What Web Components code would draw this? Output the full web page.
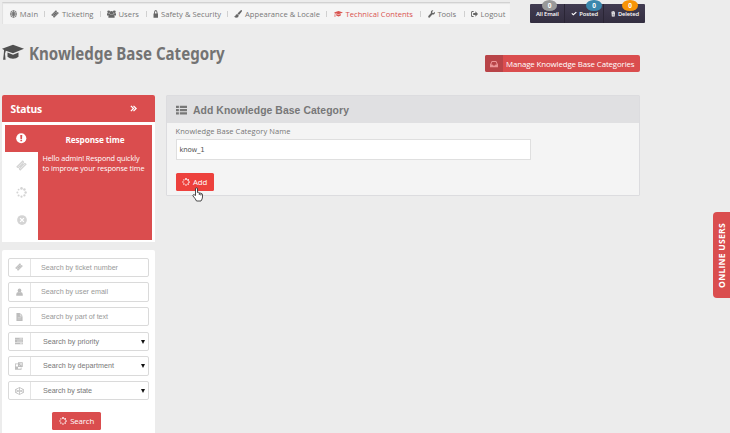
<!DOCTYPE html>
<html lang="en"><head><meta charset="utf-8"><title>Knowledge Base Category</title>
<style>html,body{margin:0;height:433px;overflow:hidden;background:#ececec}</style></head>
<body><help-desk></help-desk>
<script>
const base = '*{box-sizing:border-box}:host{display:block}';
function define(name, build, after) {
  customElements.define(name, class extends HTMLElement {
    connectedCallback() {
      if (this.shadowRoot) return;
      const root = this.attachShadow({mode: 'open'});
      root.innerHTML = build(this);
      if (after) after(this, root);
    }
  });
}
const burst = Array.from({length: 8}, (_, i) => {
  const a = i * Math.PI / 4;
  return `<circle cx="${8 + 6 * Math.sin(a)}" cy="${8 - 6 * Math.cos(a)}" r="${1.9 - i * .08}"/>`;
}).join('');
const icons = {
  globe: '<g fill="none" stroke="currentColor" stroke-width="1.5"><circle cx="8" cy="8" r="6.8"/><circle cx="8" cy="8" r="3.4"/><path d="M8 1v14M1 8h14M3 3l10 10M13 3 3 13"/></g>',
  ticket: '<path d="m9.8.3 1.800 1.800a1.600 1.600 0 0 0 2.200 2.200L15.700 6.200 6.200 15.700 4.300 13.800a1.600 1.600 0 0 0-2.200-2.200L.3 9.800z"/><path d="m9.600 3.800 2.700 2.700-5.800 5.800-2.700-2.700z" fill="none" stroke="var(--hole,#f4f4f4)" stroke-width=".7"/>',
  users: '<circle cx="3" cy="3.500" r="2.500"/><circle cx="13" cy="3.500" r="2.500"/><circle cx="8" cy="5.500" r="3.300"/><path d="M0 6.500h4.500l1 2L3 11H0zM16 6.500h-4.500l-1 2L13 11h3zM2.500 15.500v-3q0-4 3.500-4 2 1.200 4 0 3.500 0 3.500 4v3z"/>',
  lock: '<path d="M3 7V5a5 5 0 0 1 10 0v2h1.500v8.500h-13V7zm2.600 0h4.800V5a2.400 2.400 0 0 0-4.800 0z"/>',
  brush: '<path d="M15.500.5q1 1-.2 2.800L10 10 7 7.200 13 1Q14.500-.3 15.500.5zM6.500 8l3 2.800q.2 4.700-5.300 4.700Q1 15.500.3 12l2 .5q.7-4 4.200-4.500z"/>',
  cap: '<path d="M8 2 16 5.200 8 8.600 2.800 6.600 2.200 9l.4 4.500H.8L1.300 9 1.500 6 0 5.200zM4 8l4 1.700L12 8v3.200q-1.500 1.600-4 1.600t-4-1.600z"/>',
  wrench: '<path d="M15.300 3.500 12.500 6.200 10 5.900 9.700 3.500 12.300.8Q9 .1 7.300 2.200 6 4 6.900 6.200L.8 12.200Q0 13.500 1.300 14.800q1.300 1.200 2.500.3l6-6.100q3 .8 4.900-1.100 1.600-1.900.6-4.400z"/>',
  logout: '<path d="M6 2H3Q0 2 0 5v6q0 3 3 3h3v-2H3.500Q2 12 2 10.500v-5Q2 4 3.500 4H6zM10 2.500 16 8l-6 5.500V10H5V6h5z"/>',
  check: '<path d="m1 8 2.300-2.300 3 3L13 2l2.300 2.300-9 9z"/>',
  trash: '<path d="M5 2V.5h6V2h4v2H1V2zM2 5h12l-1 11H3zm3 2v7h1V7zm2.500 0v7h1V7zM10 7v7h1V7z" fill-rule="evenodd"/>',
  inbox: '<path d="M3.500 2h9L16 9v5.500H0V9zm1 2L2.300 9H5l1 2h4l1-2h2.700l-2.200-5z" fill-rule="evenodd"/>',
  alert: '<circle cx="8" cy="8" r="7.700"/><path d="M6.500 3h3L9.200 9H6.800zM6.700 10.200h2.600v2.400H6.700z" fill="#da4d4e"/>',
  close: '<circle cx="8" cy="8" r="7.800"/><path d="m5 5 6 6m0-6-6 6" stroke="#fff" stroke-width="2.200"/>',
  spin: burst,
  chevrons: '<path d="m2 2 6 6-6 6M8 2l6 6-6 6" fill="none" stroke="currentColor" stroke-width="3"/>',
  list: '<path d="M0 1h4v3.800H0zM5.300 1H16v3.800H5.300zM0 6.200h4V10H0zM5.300 6.200H16V10H5.300zM0 11.400h4v3.800H0zM5.300 11.400H16v3.800H5.300z"/>',
  user: '<circle cx="8" cy="5" r="4.200"/><path d="M.5 15.500V13q0-4.500 4.500-4.800 3 1.500 6 0 4.500.3 4.500 4.800v2.500z"/>',
  file: '<path d="M1 0h8v6.500h6V16H1zM10 0l5 5.500h-5z"/><path d="M4 9h8M4 12h8" stroke="#fff" stroke-width=".6"/>',
  bars: '<path d="M0 1.500h16v3.800H0zM0 6.200h16V10H0zM0 10.900h16v3.800H0z"/><path d="M9 3.500h6M4 8.100h11M10 12.800h5" stroke="#fff" stroke-width="1"/>',
  dept: '<path d="M0 3h6v1.500H1.500v9h10V11H13v4.500H0zM6 .5h9.500V10H6zM1.500 9H6v4.500H1.500z"/><path d="M9 3h4v4M13 3 8.500 7.500" stroke="#fff" stroke-width="1" fill="none"/>',
  hex: '<path d="m8 1 7 4v6l-7 4-7-4V5zM1 5l7 4 7-4M1 11l7-4 7 4M8 1v6m0 2v6" fill="none" stroke="currentColor" stroke-width="1.500"/>'
};
define('ui-icon', e => `<style>:host{display:block;flex:none;width:${e.getAttribute('w')}px;height:${e.getAttribute('h') || e.getAttribute('w')}px}svg{display:block;width:100%;height:100%;fill:currentColor}</style><svg viewBox="0 0 16 16" preserveAspectRatio="none">${icons[e.getAttribute('name')]}</svg>`);

/* A one-line label fitted to the given width: by tracking, or by condensing the glyphs. */
define('ui-label', () => '<style>:host{display:block;white-space:nowrap;flex:none}span{display:inline-block;transform-origin:0 0}</style><span><slot></slot></span>', (e, root) => {
  const w = +e.getAttribute('w'), s = root.querySelector('span');
  e.style.width = w + 'px';
  const natural = s.getBoundingClientRect().width;
  if (e.hasAttribute('condense')) s.style.transform = `scaleX(${w / natural})`;
  else s.style.letterSpacing = (w - natural) / e.textContent.length + 'px';
});

define('nav-item', e => `<style>${base}:host{flex:0 0 ${e.getAttribute('size')}px;height:14px;display:flex;align-items:center;padding-left:${e.getAttribute('pad') || 6.5}px;color:#777}
:host([active]){color:#d9534f}:host(:not(:last-child)){background:linear-gradient(#d0d0d0,#d0d0d0) right center/1px 6px no-repeat}
ui-icon{margin-right:${e.getAttribute('gap') || 3}px}:host(:not([active])) ui-icon{color:#666}ui-label{font:7.600px/14px "Open Sans",sans-serif}</style>
<ui-icon name="${e.getAttribute('icon')}" w="${e.getAttribute('iw') || 8}" h="8"></ui-icon><ui-label w="${e.getAttribute('tw')}">${e.textContent}</ui-label>`);
define('main-nav', () => `<style>${base}:host{display:flex;width:508px;height:22px;margin-top:2px;align-items:center;background:#f5f5f5;border-top:1px solid #d2d2d2;border-left:1px solid #e2e2e2;box-shadow:inset 0 1px 1px #e6e6e6}</style><slot></slot>`);

define('mail-item', e => `<style>${base}:host{flex:0 0 ${e.getAttribute('size')}px;position:relative;display:flex;align-items:center;justify-content:center;gap:2.500px;padding-top:1px;color:#fff;--hole:#3b3549}
:host(:not(:last-child)){border-right:1px solid #2a2535}
ui-label{font:600 5.800px/10px "Open Sans",sans-serif}
b{position:absolute;top:-4px;left:${e.getAttribute('bx')}px;width:15.500px;height:11px;border-radius:50%;background:${e.getAttribute('color')};font:700 6.500px/12px "Open Sans",sans-serif;text-align:center}</style>
${e.hasAttribute('icon') ? `<ui-icon name="${e.getAttribute('icon')}" w="${e.getAttribute('iw')}" h="5.500"></ui-icon>` : ''}<ui-label w="${e.getAttribute('tw')}">${e.textContent}</ui-label><b>0</b>`);
define('mail-bar', () => `<style>${base}:host{display:flex;width:115px;height:19px;margin:4px 0 0 20.400px;background:linear-gradient(#423c52,#332e40);border-radius:1px}</style><slot></slot>`);

define('status-panel', () => `<style>${base}:host{width:153px;height:147px;background:#fff;border-radius:2px 2px 0 0;color:#fff}
header{height:27px;background:#da4d4e;border-radius:2px 2px 0 0;display:flex;align-items:center;justify-content:space-between;padding:0 18px 0 8.500px}
header ui-label{font:700 10.300px/26px "Open Sans",sans-serif}
.body{display:flex;padding:3px 3px 2.500px}.tabs{width:33px;color:#d4d4d4;--hole:#fff}.tabs div{height:27px;display:grid;place-items:center}.tabs .on{background:#da4d4e;color:#fff}
section{width:114px;height:114.500px;background:#da4d4e;padding:7px 0 0 4.500px}
h3{margin:0 0 0 23px;font:700 8.200px/15px "Open Sans",sans-serif}p{margin:7px 0 0;font:7.300px/9.900px "Open Sans",sans-serif}</style>
<header><ui-label w="31.5">Status</ui-label><ui-icon name="chevrons" w="7"></ui-icon></header>
<div class="body"><div class="tabs"><div class="on"><ui-icon name="alert" w="10.500"></ui-icon></div><div><ui-icon name="ticket" w="11"></ui-icon></div><div><ui-icon name="spin" w="11"></ui-icon></div><div><ui-icon name="close" w="10"></ui-icon></div></div>
<section><h3><ui-label w="59">Response time</ui-label></h3><p><ui-label w="97">Hello admin! Respond quickly</ui-label><ui-label w="102">to improve your response time</ui-label></p></section></div>`);

define('search-row', e => `<style>${base}:host{display:flex;height:19.500px;border:1px solid #dadada;border-radius:2px;color:#999;background:#fff;--hole:#fff}
i{width:21.500px;border-right:1px solid #e4e4e4;display:grid;place-items:center;color:#bdbdbd}
ui-label{font:7.200px/18.500px "Liberation Sans",sans-serif;margin-left:10.500px}
:host([select]) ui-label{margin-left:12.500px;color:#777}
em{margin:7px 3px 0 auto;width:4px;height:4px}em:before{content:"";display:block;border:2px solid transparent;border-top:4px solid #111;border-bottom:0}</style>
<i><ui-icon name="${e.getAttribute('icon')}" w="${e.getAttribute('iw') || 8}" h="8"></ui-icon></i><ui-label w="${e.getAttribute('tw')}">${e.textContent}</ui-label>${e.hasAttribute('select') ? '<em></em>' : ''}`);
define('red-button', e => `<style>${base}:host{display:flex;align-items:center;justify-content:center;gap:3px;width:${e.getAttribute('w')}px;height:18px;background:${e.getAttribute('bg')};color:#fff;border-radius:1.500px}
ui-label{font:7.800px/18px "Open Sans",sans-serif}</style><ui-icon name="spin" w="8"></ui-icon><ui-label w="${e.getAttribute('tw')}">${e.textContent}</ui-label>`);
define('search-panel', () => `<style>${base}:host{box-sizing:border-box;width:153px;height:190px;margin-top:8px;padding:7.500px 6px;background:#fff;border-radius:2px}
.rows{display:grid;gap:5.200px}red-button{margin:12px 0 0 44.400px}</style><div class="rows">
<search-row icon="ticket" tw="77">Search by ticket number</search-row><search-row icon="user" iw="7" tw="67">Search by user email</search-row><search-row icon="file" iw="7" tw="67">Search by part of text</search-row>
<search-row select icon="bars" tw="56">Search by priority</search-row><search-row select icon="dept" tw="71">Search by department</search-row><search-row select icon="hex" iw="9" tw="49">Search by state</search-row></div>
<red-button w="48.500" tw="24" bg="#da4d4e">Search</red-button>`);

define('page-title', () => `<style>${base}:host{display:flex;height:71px}
h1{display:flex;margin:17px 0 0;color:#737373;width:483px;font:700 17.200px/25px "Noto Sans",sans-serif}h1 ui-icon{color:#505050;margin:1px 5px 0 0}
.manage{margin-top:31px;width:155px;height:17px;background:#da4d4e;border-radius:2px;display:flex;overflow:hidden;color:#fff}
.manage i{width:18px;background:#b84448;display:grid;place-items:center;color:#ec9496}.manage ui-label{font:7.900px/18px "Open Sans",sans-serif;margin-left:3px}</style>
<h1><ui-icon name="cap" w="22" h="21"></ui-icon><ui-label condense w="195.500">Knowledge Base Category</ui-label></h1>
<div class="manage"><i><ui-icon name="inbox" w="8"></ui-icon></i><ui-label w="128.500">Manage Knowledge Base Categories</ui-label></div>`);

define('category-form', () => `<style>${base}:host{width:474px;height:101px;background:#f4f4f4;border:1px solid #dcdcdf;border-radius:1px}
header{height:27px;background:#e0e0e2;display:flex;align-items:center;gap:6px;padding:1px 0 0 8.500px;color:#777}header ui-label{font:700 10.400px/27px "Liberation Sans",sans-serif}
.form{padding:3px 8.500px;color:#777}.form>ui-label{font:7.500px/11px "Open Sans",sans-serif}
.field{width:355px;height:21px;margin:2px 0 13px;padding-left:3px;background:#fff;border:1px solid #dfdfdf;color:#555}.field ui-label{font:7px/20px "DejaVu Sans",sans-serif}
.act{position:relative;width:38px}.act svg{position:absolute;left:15.500px;top:14px;width:13px;height:15px}</style>
<header><ui-icon name="list" w="11.500" h="10"></ui-icon><ui-label w="156">Add Knowledge Base Category</ui-label></header>
<div class="form"><ui-label w="115">Knowledge Base Category Name</ui-label><div class="field"><ui-label w="25">know_1</ui-label></div>
<div class="act"><red-button w="38" tw="14" bg="#ed413d">Add</red-button><svg viewBox="0 0 13 15"><path d="M4.500 8.500V2q0-1.200 1-1.200t1 1.200v3.500q1-.5 1.800.4 1-.3 1.600.6 1.600-.2 1.600 1.500v2q0 1.800-1.500 4H5.500Q4.500 11.800 2 9q-.5-1 .5-1.300 1 0 2 .8zM8.300 6v2M9.900 6.700V8.500" fill="#fff" stroke="#222" stroke-width=".8"/></svg></div></div>`);

define('online-tab', () => `<style>${base}:host{position:absolute;right:0;top:212px;width:17px;height:86px;background:#da4d4e;border-radius:4px 0 0 4px;color:#fff;display:grid;place-items:center}
div{writing-mode:vertical-rl;transform:rotate(180deg);font:700 8.600px/12px "Open Sans",sans-serif;letter-spacing:.24px;white-space:nowrap}</style><div>ONLINE USERS</div>`);

define('help-desk', () => `<style>${base}:host{position:relative;box-sizing:border-box;width:730px;height:433px;overflow:hidden;background:#ececec;padding-left:2px}
.top{display:flex;height:24px}.cols{display:flex;gap:11px}</style>
<div class="top"><main-nav>
<nav-item icon="globe" size="41.500" pad="6.800" iw="7" tw="18.500">Main</nav-item><nav-item icon="ticket" size="56" tw="31.500">Ticketing</nav-item><nav-item icon="users" size="46" iw="9" gap="2.500" tw="20.500">Users</nav-item><nav-item icon="lock" size="81" iw="5.500" gap="2.500" tw="60">Safety &amp; Security</nav-item><nav-item icon="brush" size="99.500" tw="75">Appearance &amp; Locale</nav-item><nav-item active icon="cap" size="94" iw="9" tw="67.500">Technical Contents</nav-item><nav-item icon="wrench" size="43.500" iw="7" tw="18.500">Tools</nav-item><nav-item icon="logout" size="45" pad="6" iw="7" tw="25">Logout</nav-item>
</main-nav><mail-bar><mail-item size="35" bx="11.500" color="#999" tw="23">All Email</mail-item><mail-item icon="check" iw="6" size="39" bx="21" color="#3a87ad" tw="19">Posted</mail-item><mail-item icon="trash" iw="4.500" size="41" bx="18" color="#f89406" tw="21">Deleted</mail-item></mail-bar></div>
<page-title></page-title><div class="cols"><aside><status-panel></status-panel><search-panel></search-panel></aside><category-form></category-form></div><online-tab></online-tab>`);
</script></body></html>
